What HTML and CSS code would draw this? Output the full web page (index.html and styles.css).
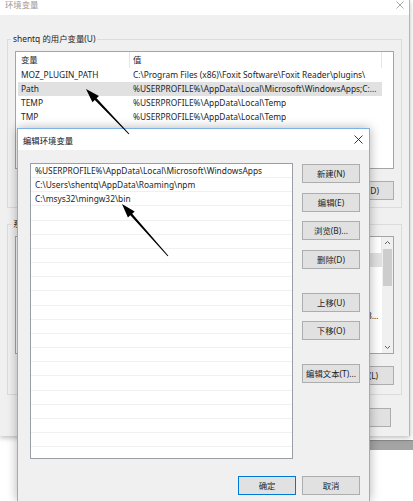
FILE: index.html
```html
<!DOCTYPE html>
<html lang="zh-CN">
<head>
    <meta charset="UTF-8">
    <meta name="viewport" content="width=device-width, initial-scale=1.0">
    <title>环境变量</title>
    <link rel="stylesheet" href="styles.css">
</head>
<body>
    <!-- something behind the windows, only its edge shows -->
    <div class="desktop-strip"></div>

    <div class="env-window">
        <div class="titlebar">
            <span class="title">环境变量</span>
            <svg class="close" width="8" height="8" viewBox="0 0 8 8"><path d="M0.5 0.5L7.5 7.5M7.5 0.5L0.5 7.5" stroke="#a0a0a0" stroke-width="0.9"/></svg>
        </div>

        <div class="env-body">
            <fieldset class="group">
                <legend>shentq 的用户变量(U)</legend>
                <div class="listview">
                    <div class="lv-columns">
                        <div class="lv-header">
                            <span class="col-name">变量</span>
                            <span class="col-value">值</span>
                        </div>
                        <div class="lv-row">
                            <span class="col-name">MOZ_PLUGIN_PATH</span>
                            <span class="col-value">C:\Program Files (x86)\Foxit Software\Foxit Reader\plugins\</span>
                        </div>
                        <div class="lv-row selected">
                            <span class="col-name">Path</span>
                            <span class="col-value">%USERPROFILE%\AppData\Local\Microsoft\WindowsApps;C:...</span>
                        </div>
                        <div class="lv-row">
                            <span class="col-name">TEMP</span>
                            <span class="col-value">%USERPROFILE%\AppData\Local\Temp</span>
                        </div>
                        <div class="lv-row">
                            <span class="col-name">TMP</span>
                            <span class="col-value">%USERPROFILE%\AppData\Local\Temp</span>
                        </div>
                    </div>
                </div>
                <div class="btn-row">
                    <button class="btn">新建(N)...</button>
                    <button class="btn">编辑(E)...</button>
                    <button class="btn">删除(D)</button>
                </div>
            </fieldset>

            <fieldset class="group group-system">
                <legend>系统变量(S)</legend>
                <div class="listview">
                    <div class="lv-columns">
                        <div class="lv-header">
                            <span class="col-name">变量</span>
                            <span class="col-value">值</span>
                        </div>
                        <div class="lv-row selected">
                            <span class="col-name">ComSpec</span>
                            <span class="col-value">C:\WINDOWS\system32\cmd.exe</span>
                        </div>
                        <div class="lv-row">
                            <span class="col-name">DriverData</span>
                            <span class="col-value">C:\Windows\System32\Drivers</span>
                        </div>
                        <div class="lv-row">
                            <span class="col-name">NUMBER_OF_PROC...</span>
                            <span class="col-value">4</span>
                        </div>
                        <div class="lv-row">
                            <span class="col-name">OS</span>
                            <span class="col-value">Windows_NT</span>
                        </div>
                        <div class="lv-row">
                            <span class="col-name">Path</span>
                            <span class="col-value">C:\ProgramData\Oracle\Java\javapath;C:\WINDOWS\system32;C:\WINDOWS;C:\WINDOWS\System32\Wbem</span>
                        </div>
                        <div class="lv-row">
                            <span class="col-name">PATHEXT</span>
                            <span class="col-value">.COM;.EXE;.BAT;.CMD</span>
                        </div>
                        <div class="lv-row">
                            <span class="col-name">PROCESSOR_ARCH...</span>
                            <span class="col-value">AMD64</span>
                        </div>
                    </div>
                    <div class="scrollbar">
                        <svg class="arrow" width="11" height="12" viewBox="0 0 11 12"><path d="M3 7L5.5 4.5L8 7" fill="none" stroke="#606060" stroke-width="1"/></svg>
                        <div class="thumb"></div>
                        <svg class="arrow arrow-down" width="11" height="12" viewBox="0 0 11 12"><path d="M3 5L5.5 7.5L8 5" fill="none" stroke="#606060" stroke-width="1"/></svg>
                    </div>
                </div>
                <div class="btn-row">
                    <button class="btn">新建(W)</button>
                    <button class="btn">编辑(I)</button>
                    <button class="btn">删除(L)</button>
                </div>
            </fieldset>

            <div class="dialog-buttons">
                <button class="btn">确定</button>
                <button class="btn">取消</button>
            </div>
        </div>
    </div>

    <div class="edit-dialog">
        <div class="dlg-title">
            <span>编辑环境变量</span>
            <svg class="close" width="9" height="9" viewBox="0 0 9 9"><path d="M0.5 0.5L8.5 8.5M8.5 0.5L0.5 8.5" stroke="#222" stroke-width="0.9"/></svg>
        </div>
        <div class="dlg-body">
            <div class="listbox">
                <div class="lb-item">%USERPROFILE%\AppData\Local\Microsoft\WindowsApps</div>
                <div class="lb-item">C:\Users\shentq\AppData\Roaming\npm</div>
                <div class="lb-item">C:\msys32\mingw32\bin</div>
                <div class="lb-item"></div>
                <div class="lb-item"></div>
                <div class="lb-item"></div>
                <div class="lb-item"></div>
                <div class="lb-item"></div>
                <div class="lb-item"></div>
                <div class="lb-item"></div>
                <div class="lb-item"></div>
                <div class="lb-item"></div>
                <div class="lb-item"></div>
                <div class="lb-item"></div>
                <div class="lb-item"></div>
                <div class="lb-item"></div>
                <div class="lb-item"></div>
                <div class="lb-item"></div>
                <div class="lb-item"></div>
                <div class="lb-item"></div>
                <div class="lb-item"></div>
            </div>
            <div class="btn-col">
                <button class="btn">新建(N)</button>
                <button class="btn">编辑(E)</button>
                <button class="btn">浏览(B)...</button>
                <button class="btn">删除(D)</button>
                <button class="btn spaced">上移(U)</button>
                <button class="btn">下移(O)</button>
                <button class="btn spaced">编辑文本(T)...</button>
            </div>
            <div class="dlg-footer">
                <button class="btn default">确定</button>
                <button class="btn">取消</button>
            </div>
        </div>
    </div>

    <!-- hand-drawn arrows on top of the screenshot -->
    <svg class="arrows" width="413" height="501" viewBox="0 0 413 501">
        <polygon points="129.36,133.65 96.6,98.24 98.95,95.99 86,89 92.45,102.21 94.8,99.96 128.64,134.35" fill="#000"/>
        <polygon points="168.37,255.67 132.22,213.66 134.65,211.51 122,204 127.91,217.47 130.34,215.32 167.63,256.33" fill="#000"/>
    </svg>
</body>
</html>
```

FILE: styles.css
```css
* {
    box-sizing: border-box;
}

body {
    margin: 0;
    width: 413px;
    height: 501px;
    overflow: hidden;
    position: relative;
    background-color: #fff;
    font-family: 'Noto Sans', 'Noto Sans CJK SC', sans-serif;
    font-size: 8.4px;
    color: #1e1e1e;
}

.desktop-strip {
    position: absolute;
    left: 300px;
    top: 440px;
    width: 113px;
    height: 10px;
    background-color: #a4a4a4;
    border-top: 1px solid #8a8a8a;
}

/* background window */
.env-window {
    position: relative;
    width: 410px;
    height: 436px;
    background-color: #f0f0f0;
    border-right: 1px solid #b5b5b5;
    box-shadow: 0 2px 5px rgba(0, 0, 0, 0.25);
}

.titlebar {
    height: 15px;
    background-color: #fff;
    display: flex;
    justify-content: space-between;
    align-items: flex-start;
    padding: 0 5px 0 5px;
    line-height: 9px;
    color: #999;
}

.titlebar .close {
    margin-top: 1px;
}

.env-body {
    display: flex;
    flex-direction: column;
    padding: 18px 7px 10px 7px;
}

.group {
    margin: 0;
    min-width: 0;
    padding: 6px 7px 7px 7px;
    border: 1px solid #dcdcdc;
}

.group legend {
    padding: 0 2px;
    margin-left: -4px;
    line-height: 12px;
}

.group-system {
    margin-top: 10px;
}

.listview {
    display: flex;
    height: 118px;
    background-color: #fff;
    border: 1px solid #a5a5a5;
    overflow: hidden;
}

.lv-columns {
    flex: 1;
    min-width: 0;
}

.lv-header,
.lv-row {
    display: flex;
    width: 364px;
    margin-left: 2px;
}

.lv-header {
    height: 16px;
    line-height: 16px;
}

.lv-header .col-name,
.lv-header .col-value {
    border-right: 1px solid #e5e5e5;
}

.lv-row {
    height: 14px;
    line-height: 14px;
}

.lv-row.selected {
    background-color: #e1e1e1;
}

.col-name {
    width: 112px;
    padding-left: 3px;
    white-space: nowrap;
    overflow: hidden;
}

.col-value {
    width: 252px;
    padding: 0 1px 0 3px;
    white-space: nowrap;
    overflow: hidden;
    text-overflow: ellipsis;
}

.scrollbar {
    width: 11px;
    display: flex;
    flex-direction: column;
    background-color: #f0f0f0;
}

.scrollbar .arrow {
    display: block;
}

.scrollbar .thumb {
    height: 37px;
    margin: 0 1px;
    background-color: #cdcdcd;
}

.scrollbar .arrow-down {
    margin-top: auto;
}

.btn {
    width: 58px;
    height: 19px;
    padding: 0;
    background-color: #e1e1e1;
    border: 1px solid #adadad;
    font: inherit;
    color: #1e1e1e;
    line-height: 17px;
    white-space: nowrap;
}

.btn-row {
    display: flex;
    justify-content: flex-end;
    gap: 6px;
    margin-top: 12px;
}

.group-system .btn-row {
    margin-top: 12px;
    margin-bottom: 2px;
}

.dialog-buttons {
    display: flex;
    justify-content: flex-end;
    gap: 6px;
    margin-top: 13px;
    margin-right: 11px;
}

/* edit dialog on top */
.edit-dialog {
    position: absolute;
    left: 17px;
    top: 128px;
    width: 353px;
    height: 373px;
    background-color: #f0f0f0;
    border: 1px solid #7fb2e5;
    border-bottom: none;
    box-shadow: 0 0 10px rgba(0, 0, 0, 0.3);
}

.dlg-title {
    height: 21px;
    background-color: #fff;
    display: flex;
    justify-content: space-between;
    align-items: center;
    padding: 0 6px 0 5px;
    color: #111;
}

.dlg-body {
    display: grid;
    grid-template-columns: 263px 58px;
    column-gap: 9px;
    align-items: start;
    padding: 13px 0 0 12px;
}

.listbox {
    height: 296px;
    background-color: #fff;
    border: 1px solid #9a9ea6;
    overflow: hidden;
}

.lb-item {
    height: 14.17px;
    line-height: 14px;
    padding-left: 4px;
    border-bottom: 1px solid #f0f0f0;
    white-space: nowrap;
}

.btn-col {
    display: flex;
    flex-direction: column;
    padding-top: 1px;
}

.btn-col .btn + .btn {
    margin-top: 9.5px;
}

.btn-col .btn.spaced {
    margin-top: 24px;
}

.dlg-footer {
    grid-column: 1 / -1;
    display: flex;
    justify-content: flex-end;
    gap: 6px;
    margin-top: 17px;
}

.btn.default {
    border-color: #0078d7;
}

.arrows {
    position: absolute;
    left: 0;
    top: 0;
    pointer-events: none;
}
```
